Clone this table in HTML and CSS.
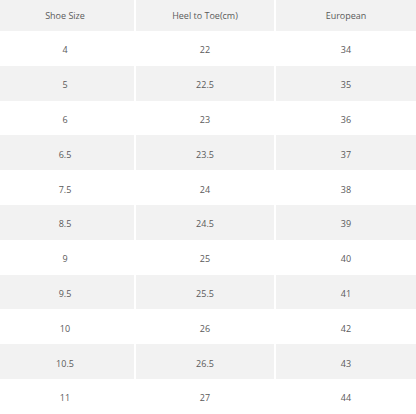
FILE: index.html
```html
<!DOCTYPE html>
<html>
<head>
<meta charset="utf-8">
<link rel="stylesheet" href="styles.css">
</head>
<body>
<table class="size-table">
  <thead>
    <tr><th>Shoe Size</th><th>Heel to Toe(cm)</th><th>European</th></tr>
  </thead>
  <tbody>
    <tr><td>4</td><td>22</td><td>34</td></tr>
    <tr><td>5</td><td>22.5</td><td>35</td></tr>
    <tr><td>6</td><td>23</td><td>36</td></tr>
    <tr><td>6.5</td><td>23.5</td><td>37</td></tr>
    <tr><td>7.5</td><td>24</td><td>38</td></tr>
    <tr><td>8.5</td><td>24.5</td><td>39</td></tr>
    <tr><td>9</td><td>25</td><td>40</td></tr>
    <tr><td>9.5</td><td>25.5</td><td>41</td></tr>
    <tr><td>10</td><td>26</td><td>42</td></tr>
    <tr><td>10.5</td><td>26.5</td><td>43</td></tr>
    <tr><td>11</td><td>27</td><td>44</td></tr>
  </tbody>
</table>
</body>
</html>
```
FILE: styles.css
```css
html, body {
  margin: 0;
  padding: 0;
  background: #fff;
}
.size-table {
  width: 416px;
  border-collapse: separate;
  border-spacing: 2px 0;
  margin-left: -2px;
  table-layout: fixed;
  font-family: "Open Sans", "Noto Sans", sans-serif;
  font-size: 9px;
  color: #5a5a5a;
}
.size-table th,
.size-table td {
  box-sizing: border-box;
  text-align: center;
  font-weight: normal;
  padding: 0;
}
.size-table th {
  height: 31px;
  background: #f2f2f2;
}
.size-table td {
  height: 34.8px;
  padding-top: 3px;
}
.size-table tbody tr:nth-child(even) td {
  background: #f2f2f2;
}
.size-table .c1 { }
.size-table th:nth-child(1), .size-table td:nth-child(1) { width: 134px; padding-right: 4px; }
.size-table th:nth-child(2), .size-table td:nth-child(2) { width: 138px; }
.size-table th:nth-child(3), .size-table td:nth-child(3) { width: 140px; }
```
